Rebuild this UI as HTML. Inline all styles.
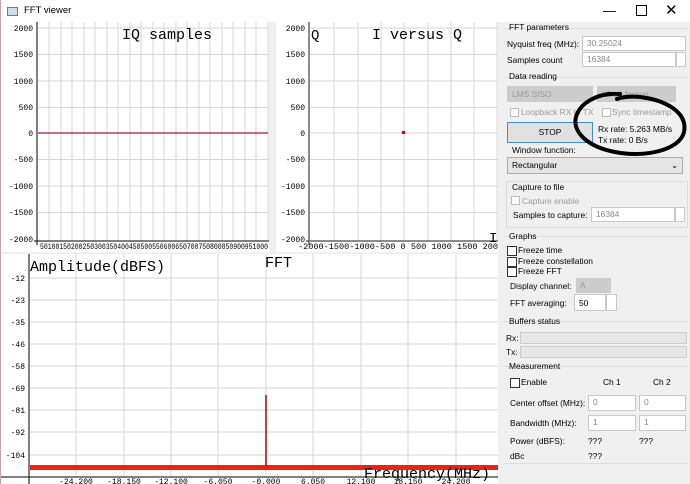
<!DOCTYPE html>
<html><head><meta charset="utf-8"><style>
body{margin:0;width:690px;height:484px;overflow:hidden;background:#f0f0f0;font-family:"Liberation Sans",sans-serif;font-size:8.4px;color:#000;position:relative}
.a{position:absolute;white-space:nowrap}
.box{position:absolute;background:#fff;border:1px solid #c8c8c8;box-sizing:border-box;color:#888;padding:1px 4px}
.dis{position:absolute;background:#ccc;border:1px solid #ccc;box-sizing:border-box;color:#999;padding:2px 4px}
.cb{position:absolute;width:9px;height:9px;border:1px solid #333;background:#fff;box-sizing:border-box}
.grp{position:absolute;border-top:1px solid #ddd;left:504px;width:184px}
</style></head><body>
<div class="a" style="left:0;top:0;width:690px;height:22px;background:#fff"></div>
<div class="a" style="left:0;top:0;width:1px;height:484px;background:#c9a0b0"></div>
<div class="a" style="left:7px;top:7px;width:9px;height:7px;border:1px solid #777;background:#cde"></div>
<div class="a" style="left:24px;top:5px;font-size:9.5px">FFT viewer</div>
<div class="a" style="left:603px;top:3px;font-size:13px">—</div>
<div class="a" style="left:636px;top:5px;width:9px;height:9px;border:1px solid #000"></div>
<div class="a" style="left:665px;top:1px;font-size:15px">✕</div>

<svg class="a" style="left:0;top:0" width="500" height="484" font-family="Liberation Mono,monospace">
<rect x="1" y="22" width="268" height="230" fill="#fff"/>
<rect x="276" y="22" width="222" height="230" fill="#fff"/>
<rect x="1" y="254" width="497" height="230" fill="#fff"/>
<g stroke="#d6d6d6" stroke-width="1">
<path d="M38 28H269M38 54.5H269M38 81H269M38 107.5H269M38 133H269M38 159.5H269M38 186H269M38 212.5H269"/>
<path d="M49 22V241M61 22V241M72 22V241M84 22V241M95 22V241M107 22V241M118 22V241M130 22V241M141 22V241M153 22V241M164 22V241M176 22V241M187 22V241M199 22V241M210 22V241M222 22V241M233 22V241M245 22V241M256 22V241M268 22V241"/>
<path d="M310 28H498M310 54.5H498M310 81H498M310 107.5H498M310 133H498M310 159.5H498M310 186H498M310 212.5H498"/>
<path d="M334 22V241M358 22V241M381 22V241M404 22V241M428 22V241M451 22V241M474 22V241M497 22V241"/>
<path d="M30 278H498M30 300H498M30 322H498M30 344H498M30 366H498M30 388H498M30 410H498M30 432H498M30 455H498"/>
<path d="M76 254V477M124 254V477M171 254V477M218 254V477M266 254V477M313 254V477M361 254V477M408 254V477M456 254V477"/>
</g>
<path d="M37 22V245M34 241H269" stroke="#000"/>
<path d="M309 22V245M306 241H498" stroke="#666" stroke-width="1.5"/>
<path d="M29 254V484M1 477H498" stroke="#000"/>
<path d="M38 133H268" stroke="#b04050" stroke-width="1.5"/>
<rect x="402" y="131" width="3" height="3" fill="#c00"/>
<rect x="30" y="465" width="468" height="5" fill="#e21"/>
<path d="M266 395V466" stroke="#a00" stroke-width="1.5"/>
<g font-size="8" text-anchor="end">
<text x="33" y="31">2000</text><text x="33" y="57">1500</text><text x="33" y="84">1000</text><text x="33" y="110">500</text><text x="33" y="136">0</text><text x="33" y="162">-500</text><text x="33" y="189">-1000</text><text x="33" y="215">-1500</text><text x="33" y="242">-2000</text>
<text x="305" y="31">2000</text><text x="305" y="57">1500</text><text x="305" y="84">1000</text><text x="305" y="110">500</text><text x="305" y="136">0</text><text x="305" y="162">-500</text><text x="305" y="189">-1000</text><text x="305" y="215">-1500</text><text x="305" y="242">-2000</text>
<text x="25" y="281">-12</text><text x="25" y="303">-23</text><text x="25" y="325">-35</text><text x="25" y="347">-46</text><text x="25" y="369">-58</text><text x="25" y="391">-69</text><text x="25" y="413">-81</text><text x="25" y="435">-92</text><text x="25" y="458">-104</text>
</g>
<text x="40" y="249" font-size="8" textLength="228" lengthAdjust="spacingAndGlyphs">50100150200250300350400450500550600650700750800850900951000</text>
<text x="298" y="249" font-size="8" textLength="200" lengthAdjust="spacingAndGlyphs">-2000-1500-1000-500  0  500 1000 1500 200</text>
<g font-size="8" text-anchor="middle"><text x="76" y="484">-24.200</text><text x="124" y="484">-18.150</text><text x="171" y="484">-12.100</text><text x="218" y="484">-6.050</text><text x="266" y="484">-0.000</text><text x="313" y="484">6.050</text><text x="361" y="484">12.100</text><text x="408" y="484">18.150</text><text x="456" y="484">24.200</text></g>
<text x="122" y="39" font-size="15">IQ samples</text>
<text x="311" y="39" font-size="14">Q</text>
<text x="372" y="39" font-size="15">I versus Q</text>
<text x="489" y="242" font-size="14">I</text>
<text x="30" y="271" font-size="15">Amplitude(dBFS)</text>
<text x="265" y="267" font-size="15">FFT</text>
<text x="364" y="478" font-size="15">Frequency(MHz)</text>
</svg>

<div class="grp" style="top:28px"></div>
<div class="a" style="left:509px;top:22px">FFT parameters</div>
<div class="a" style="left:507px;top:39px">Nyquist freq (MHz):</div>
<div class="box" style="left:582px;top:36px;width:104px;height:15px">30.25024</div>
<div class="a" style="left:507px;top:55px">Samples count</div>
<div class="box" style="left:582px;top:52px;width:94px;height:15px">16384</div>
<div class="box" style="left:676px;top:52px;width:10px;height:15px;padding:0"></div>
<div class="grp" style="top:77px"></div>
<div class="a" style="left:509px;top:71px">Data reading</div>
<div class="dis" style="left:507px;top:86px;width:86px;height:16px">LMS SISO</div>
<div class="dis" style="left:597px;top:86px;width:79px;height:16px">12 bit format</div>
<div class="cb" style="left:510px;top:108px;border-color:#bbb"></div>
<div class="a" style="left:521px;top:107px;color:#999">Loopback RX to TX</div>
<div class="cb" style="left:602px;top:108px;border-color:#bbb"></div>
<div class="a" style="left:612px;top:107px;color:#999">Sync timestamp</div>
<div class="a" style="left:507px;top:122px;width:86px;height:21px;border:1px solid #3c8fd0;background:#e1e1e1;box-sizing:border-box;text-align:center;line-height:19px">STOP</div>
<div class="a" style="left:598px;top:124px">Rx rate: 5.263 MB/s</div>
<div class="a" style="left:598px;top:135px">Tx rate: 0 B/s</div>
<div class="a" style="left:512px;top:145px">Window function:</div>
<div class="a" style="left:507px;top:157px;width:176px;height:17px;border:1px solid #aaa;background:#e5e5e5;box-sizing:border-box;padding:2px 4px">Rectangular<span style="float:right">⌄</span></div>
<div class="a" style="left:506px;top:181px;width:180px;height:45px;border:1px solid #ddd"></div>
<div class="a" style="left:512px;top:182px">Capture to file</div>
<div class="cb" style="left:511px;top:196px;border-color:#bbb"></div>
<div class="a" style="left:522px;top:196px;color:#999">Capture enable</div>
<div class="a" style="left:513px;top:210px">Samples to capture:</div>
<div class="box" style="left:591px;top:207px;width:84px;height:15px">16384</div>
<div class="box" style="left:675px;top:207px;width:10px;height:15px;padding:0"></div>
<svg class="a" style="left:570px;top:92px" width="118" height="72"><path d="M50 2C30 0 10 10 6 25C2 40 18 55 45 60C75 66 110 58 114 40C118 20 95 8 70 5C60 4 52 5 47 7" fill="none" stroke="#000" stroke-width="4" stroke-linecap="round"/></svg>
<div class="grp" style="top:236px"></div>
<div class="a" style="left:509px;top:231px">Graphs</div>
<div class="cb" style="left:507px;top:246px;width:10px;height:10px"></div><div class="a" style="left:518px;top:245px">Freeze time</div>
<div class="cb" style="left:507px;top:257px;width:10px;height:10px"></div><div class="a" style="left:518px;top:256px">Freeze constellation</div>
<div class="cb" style="left:507px;top:267px;width:10px;height:10px"></div><div class="a" style="left:518px;top:266px">Freeze FFT</div>
<div class="a" style="left:510px;top:281px">Display channel:</div>
<div class="dis" style="left:576px;top:278px;width:35px;height:15px;padding:1px 3px">A</div>
<div class="a" style="left:510px;top:298px">FFT averaging:</div>
<div class="box" style="left:574px;top:294px;width:32px;height:17px;color:#000;padding:3px 4px">50</div>
<div class="box" style="left:606px;top:294px;width:11px;height:17px;padding:0"></div>
<div class="grp" style="top:321px"></div>
<div class="a" style="left:509px;top:316px">Buffers status</div>
<div class="a" style="left:506px;top:333px">Rx:</div><div class="a" style="left:520px;top:332px;width:165px;height:10px;background:#e6e6e6;border:1px solid #ccc"></div>
<div class="a" style="left:506px;top:347px">Tx:</div><div class="a" style="left:520px;top:346px;width:165px;height:10px;background:#e6e6e6;border:1px solid #ccc"></div>
<div class="grp" style="top:366px"></div>
<div class="a" style="left:509px;top:361px">Measurement</div>
<div class="cb" style="left:510px;top:378px;width:10px;height:10px"></div><div class="a" style="left:521px;top:377px">Enable</div>
<div class="a" style="left:603px;top:377px">Ch 1</div><div class="a" style="left:653px;top:377px">Ch 2</div>
<div class="a" style="left:510px;top:398px">Center offset (MHz):</div>
<div class="box" style="left:588px;top:395px;width:48px;height:16px">0</div>
<div class="box" style="left:639px;top:395px;width:47px;height:16px">0</div>
<div class="a" style="left:510px;top:418px">Bandwidth (MHz):</div>
<div class="box" style="left:588px;top:415px;width:48px;height:16px">1</div>
<div class="box" style="left:639px;top:415px;width:47px;height:16px">1</div>
<div class="a" style="left:510px;top:436px">Power (dBFS):</div>
<div class="a" style="left:588px;top:436px">???</div><div class="a" style="left:639px;top:436px">???</div>
<div class="a" style="left:510px;top:451px">dBc</div><div class="a" style="left:588px;top:451px">???</div>
<div class="a" style="left:504px;top:463px;width:184px;border-top:1px solid #ddd"></div>
</body></html>
